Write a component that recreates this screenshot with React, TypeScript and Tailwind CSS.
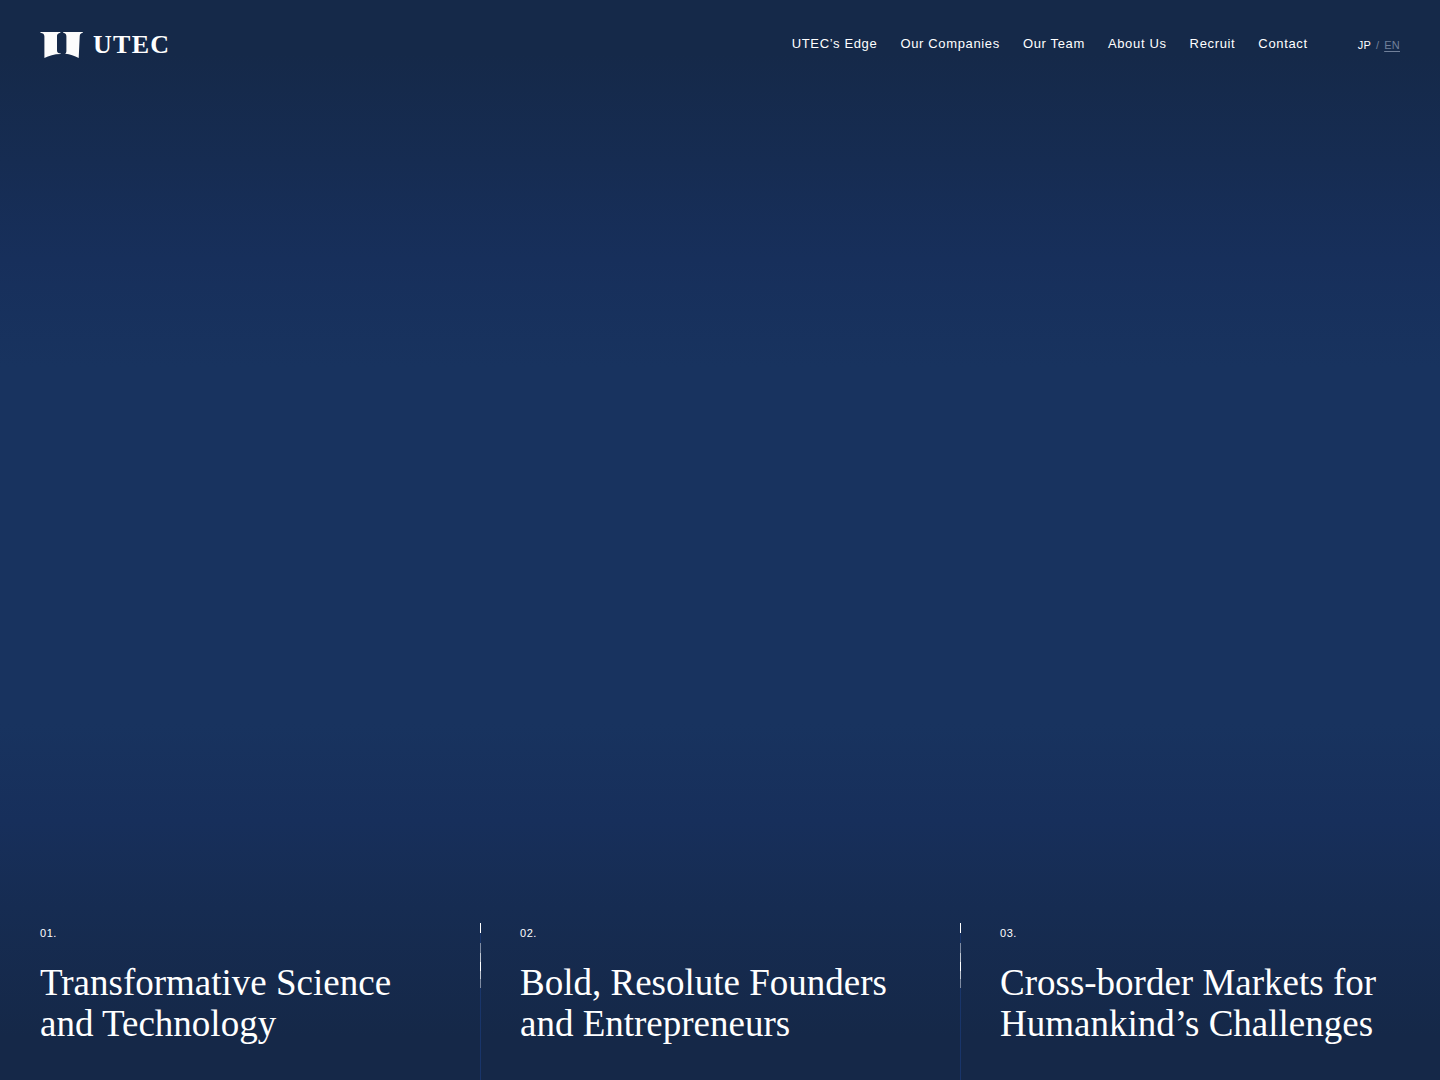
const navItems = ["UTEC’s Edge", "Our Companies", "Our Team", "About Us", "Recruit", "Contact"];

const pillars = [
  { no: "01.", lines: ["Transformative Science", "and Technology"] },
  { no: "02.", lines: ["Bold, Resolute Founders", "and Entrepreneurs"] },
  { no: "03.", lines: ["Cross-border Markets for", "Humankind’s Challenges"] },
];

function Logo() {
  return (
    <a href="#" className="flex items-start gap-2.5">
      <svg width="43" height="27" viewBox="0 0 43 27" fill="#fcfcfc" aria-hidden="true" className="block">
        <path d="M.4 0H20.4V.8C18 1.4 17 2.2 17 4V18.4C17 20.3 18.2 21.2 20.8 21.5V22C14 22.2 9 23.6 4.4 26V4.5C4.4 2.2 3 1.1 .4 .8Z" />
        <path d="M23.2 0H42.8V.8C40.6 1.2 39.8 2.4 39.7 4.5L38.7 26C34.5 23.7 30 22.4 25.4 21.8V21.3C26.2 20.8 26.4 20 26.4 18.4V4.5C26.4 2.4 25.6 1.3 23.2 .8Z" />
      </svg>
      <span className="font-['Liberation_Serif',serif] text-[26px] leading-[26px] font-bold tracking-wider">UTEC</span>
    </a>
  );
}

// thin column rule with the bright scroll marker on top
function Divider() {
  return (
    <div aria-hidden="true" className="absolute inset-y-0 left-0 w-px bg-[#19356a]">
      <div className="h-2.5 bg-white" />
      <div className="mt-2.5 h-[10px] bg-[#7f8ca3]" />
      <div className="h-[9px] bg-[#c0c7d2]" />
      <div className="h-[9px] bg-white" />
      <div className="h-[8px] bg-[#c0c7d2]" />
      <div className="h-[9px] bg-[#7f8ca3]" />
    </div>
  );
}

function App() {
  return (
    <div className="flex min-h-screen flex-col bg-linear-[180deg,#152949_0%,#152949_5%,#162c52_15%,#172f5b_24%,#18335f_34%,#18335f_67%,#172f5b_76%,#162c52_84%,#152848_96%,#152848_100%] font-['Liberation_Sans',sans-serif] text-white">
      <header className="flex items-start justify-between px-10 pt-8">
        <Logo />
        <div className="flex items-start gap-[50px]">
          <nav className="flex gap-[23px] text-[13px] leading-6 tracking-wider">
            {navItems.map((item) => (
              <a key={item} href="#">{item}</a>
            ))}
          </nav>
          <div className="flex gap-[5px] text-[11px] leading-[26px]">
            <a href="#" className="tracking-wide">JP</a>
            <span className="text-[#71809a]">/</span>
            <a href="#" className="tracking-wide text-[#71809a] underline underline-offset-2">EN</a>
          </div>
        </div>
      </header>

      <main className="mt-auto grid grid-cols-3">
        {pillars.map((pillar, i) => (
          <section key={pillar.no} className="relative px-10 pt-[2px] pb-9">
            {i > 0 && <Divider />}
            <p className="text-[11px] leading-4 tracking-wider">{pillar.no}</p>
            <h2 className="mt-[21px] font-['Liberation_Serif',serif] text-[37px] leading-[41px] whitespace-nowrap">
              {pillar.lines.map((line) => (
                <span key={line} className="block">{line}</span>
              ))}
            </h2>
          </section>
        ))}
      </main>
    </div>
  );
}

export default App;
